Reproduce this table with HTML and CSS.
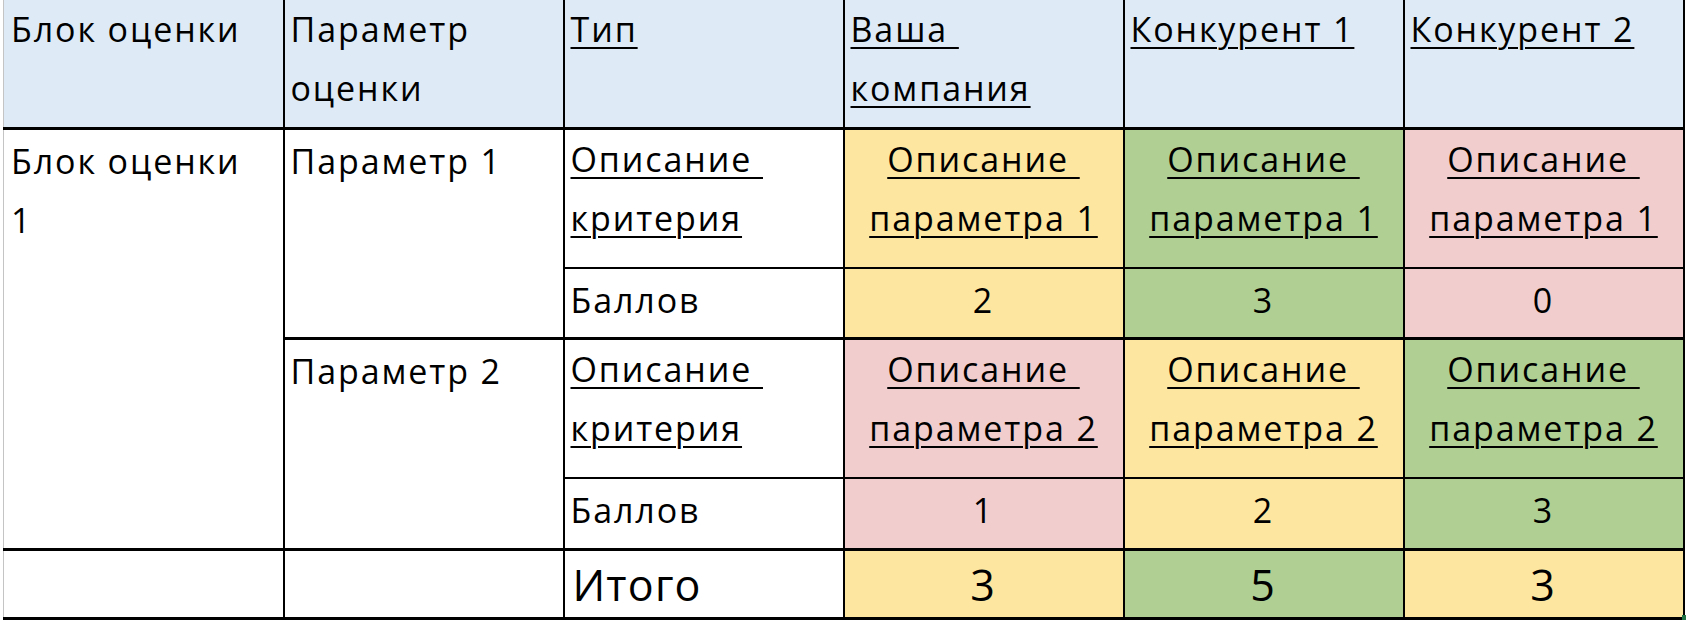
FILE: index.html
```html
<!DOCTYPE html>
<html lang="ru">
<head>
<meta charset="utf-8">
<title>Оценка</title>
<link rel="stylesheet" href="styles.css">
</head>
<body>
<div class="sheet">
<table class="grid">
  <colgroup>
    <col class="c"><col class="c"><col class="c"><col class="c"><col class="c"><col class="c">
  </colgroup>
  <tr class="r-head">
    <td class="h first">Блок оценки</td>
    <td class="h">Параметр<br>оценки</td>
    <td class="h"><span class="u">Тип</span></td>
    <td class="h"><span class="u">Ваша&nbsp;</span><br><span class="u">компания</span></td>
    <td class="h"><span class="u">Конкурент 1</span></td>
    <td class="h"><span class="u">Конкурент 2</span></td>
  </tr>
  <tr class="r-desc">
    <td class="first side thick-b" rowspan="4">Блок оценки<br>1</td>
    <td class="side thick-b" rowspan="2">Параметр 1</td>
    <td class="desc"><span class="u">Описание&nbsp;</span><br><span class="u">критерия</span></td>
    <td class="desc val yellow"><span class="u">Описание&nbsp;</span><br><span class="u">параметра 1</span></td>
    <td class="desc val green"><span class="u">Описание&nbsp;</span><br><span class="u">параметра 1</span></td>
    <td class="desc val pink"><span class="u">Описание&nbsp;</span><br><span class="u">параметра 1</span></td>
  </tr>
  <tr class="r-score">
    <td class="score thick-b">Баллов</td>
    <td class="score val yellow thick-b">2</td>
    <td class="score val green thick-b">3</td>
    <td class="score val pink thick-b">0</td>
  </tr>
  <tr class="r-desc">
    <td class="side thick-b" rowspan="2">Параметр 2</td>
    <td class="desc"><span class="u">Описание&nbsp;</span><br><span class="u">критерия</span></td>
    <td class="desc val pink"><span class="u">Описание&nbsp;</span><br><span class="u">параметра 2</span></td>
    <td class="desc val yellow"><span class="u">Описание&nbsp;</span><br><span class="u">параметра 2</span></td>
    <td class="desc val green"><span class="u">Описание&nbsp;</span><br><span class="u">параметра 2</span></td>
  </tr>
  <tr class="r-score2">
    <td class="score thick-b">Баллов</td>
    <td class="score val pink thick-b">1</td>
    <td class="score val yellow thick-b">2</td>
    <td class="score val green thick-b">3</td>
  </tr>
  <tr class="r-total">
    <td class="first total-cell"></td>
    <td class="total-cell"></td>
    <td class="total-cell total-label">Итого</td>
    <td class="total-cell val yellow">3</td>
    <td class="total-cell val green">5</td>
    <td class="total-cell val yellow">3</td>
  </tr>
</table>
<span class="handle"></span>
</div>
</body>
</html>
```

FILE: styles.css
```css
html, body {
  margin: 0;
  padding: 0;
  background: #ffffff;
}

body {
  font-family: "Open Sans", "Liberation Sans", sans-serif;
  color: #000;
}

.sheet {
  position: relative;
  width: 1686px;
  height: 620px;
  overflow: hidden;
}

.grid {
  margin-left: 3px;
  border-collapse: collapse;
  table-layout: fixed;
  width: 1680px;
}

.c {
  width: 280px;
}

.grid td {
  border: 2px solid #000;
  padding: 0 0 0 6px;
  font-size: 34px;
  font-weight: 500;
  letter-spacing: 1.9px;
  line-height: 59px;
  vertical-align: top;
  white-space: nowrap;
  overflow: hidden;
}

.grid td.first {
  border-left: 1px solid #c4c4c4;
  padding-left: 7px;
}

.r-head { height: 128px; }
.r-desc { height: 140px; }
.r-score { height: 70px; }
.r-score2 { height: 71px; }
.r-total { height: 69px; }

.h {
  background: #deeaf6;
}

.r-head td {
  border-top: none;
  border-bottom: 3px solid #000;
}

.side {
  padding-top: 2px !important;
}

.thick-b {
  border-bottom: 3px solid #000 !important;
}

.u {
  text-decoration: underline;
  text-decoration-thickness: 2px;
  text-underline-offset: 5px;
}

.val {
  text-align: center;
  padding-left: 0 !important;
}

.score {
  vertical-align: middle !important;
  line-height: 46px !important;
  padding-bottom: 6px !important;
}

.total-cell {
  vertical-align: middle !important;
  font-size: 43px !important;
  line-height: 54px !important;
  padding-top: 2px !important;
  border-bottom: 3px solid #000 !important;
}

.total-label {
  padding-left: 8px !important;
  letter-spacing: 1.2px !important;
}

.yellow { background: #fde69f; }
.green { background: #afcf93; }
.pink { background: #f1cdcd; }

.handle {
  position: absolute;
  left: 1682px;
  top: 615px;
  width: 4px;
  height: 5px;
  background: #217346;
}
```
